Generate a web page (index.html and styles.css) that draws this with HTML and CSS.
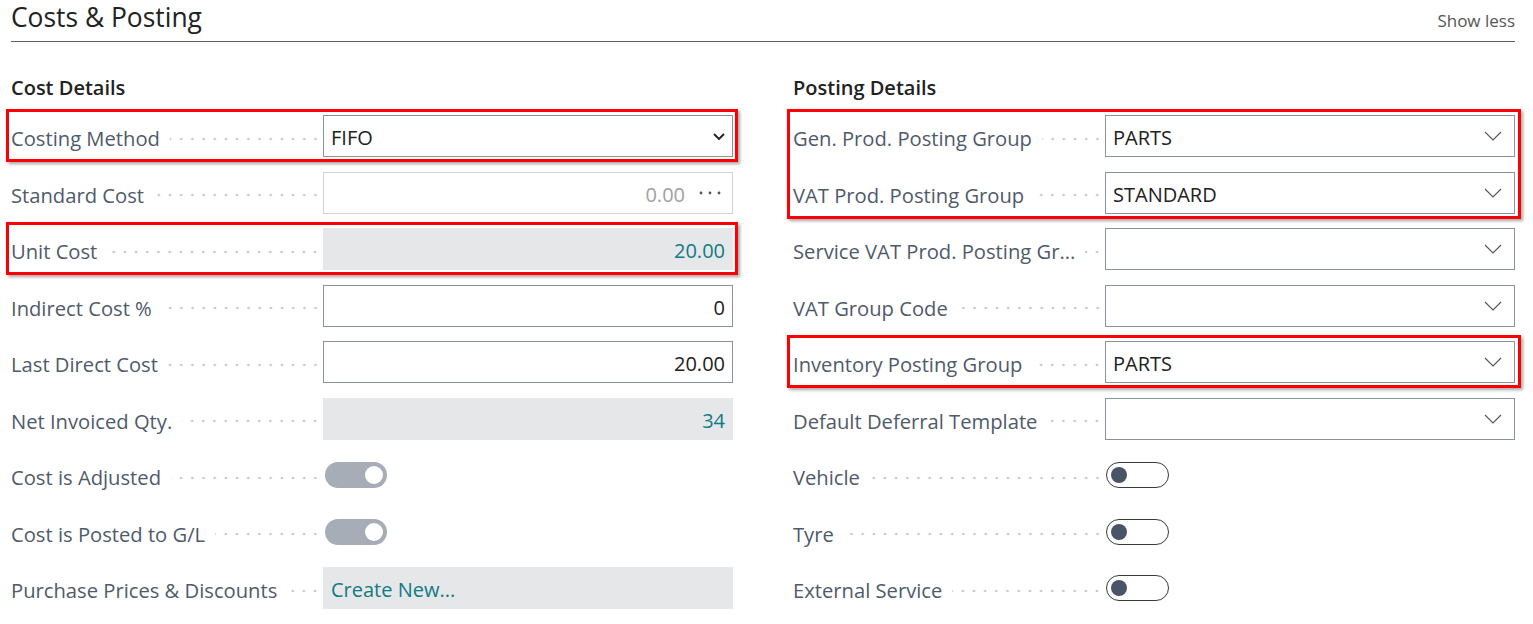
FILE: index.html
```html
<!DOCTYPE html>
<html lang="en">
<head>
<meta charset="utf-8">
<title>Costs &amp; Posting</title>
<link rel="stylesheet" href="styles.css">
</head>
<body>
<div class="page">
  <header class="head">
    <h1 class="title">Costs &amp; Posting</h1>
    <span class="more">Show less</span>
  </header>
  <div class="cols">
    <section class="col">
      <h2 class="sec">Cost Details</h2>
      <div class="row hl">
        <div class="lbl"><span class="txt">Costing Method</span><span class="lead"></span></div>
        <div class="field"><span class="val">FIFO</span><svg class="chev-dark" width="12" height="7" viewBox="0 0 12 7"><path d="M1 1l5 5 5-5" fill="none" stroke="#222" stroke-width="1.9"/></svg></div>
      </div>
      <div class="row">
        <div class="lbl"><span class="txt">Standard Cost</span><span class="lead"></span></div>
        <div class="field soft"><span class="val num muted">0.00</span><svg class="ell" width="22" height="4" viewBox="0 0 22 4"><circle cx="2" cy="2" r="1.4" fill="#555"/><circle cx="11" cy="2" r="1.4" fill="#555"/><circle cx="20" cy="2" r="1.4" fill="#555"/></svg></div>
      </div>
      <div class="row hl">
        <div class="lbl"><span class="txt">Unit Cost</span><span class="lead"></span></div>
        <div class="field ro"><span class="val num teal">20.00</span></div>
      </div>
      <div class="row">
        <div class="lbl"><span class="txt">Indirect Cost %</span><span class="lead"></span></div>
        <div class="field"><span class="val num">0</span></div>
      </div>
      <div class="row">
        <div class="lbl"><span class="txt">Last Direct Cost</span><span class="lead"></span></div>
        <div class="field"><span class="val num">20.00</span></div>
      </div>
      <div class="row">
        <div class="lbl"><span class="txt">Net Invoiced Qty.</span><span class="lead"></span></div>
        <div class="field ro"><span class="val num teal">34</span></div>
      </div>
      <div class="row">
        <div class="lbl"><span class="txt">Cost is Adjusted</span><span class="lead"></span></div>
        <div class="sw"><span class="tgl on"><span class="knob"></span></span></div>
      </div>
      <div class="row">
        <div class="lbl"><span class="txt">Cost is Posted to G/L</span><span class="lead"></span></div>
        <div class="sw"><span class="tgl on"><span class="knob"></span></span></div>
      </div>
      <div class="row">
        <div class="lbl"><span class="txt">Purchase Prices &amp; Discounts</span><span class="lead"></span></div>
        <div class="field ro"><span class="val teal">Create New...</span></div>
      </div>
    </section>

    <section class="col">
      <h2 class="sec">Posting Details</h2>
      <div class="hlgroup">
        <div class="row">
          <div class="lbl"><span class="txt">Gen. Prod. Posting Group</span><span class="lead"></span></div>
          <div class="field"><span class="val">PARTS</span><svg class="chev" width="18" height="10" viewBox="0 0 18 10"><path d="M1 1l8 8 8-8" fill="none" stroke="#555" stroke-width="1.1"/></svg></div>
        </div>
        <div class="row">
          <div class="lbl"><span class="txt">VAT Prod. Posting Group</span><span class="lead"></span></div>
          <div class="field"><span class="val">STANDARD</span><svg class="chev" width="18" height="10" viewBox="0 0 18 10"><path d="M1 1l8 8 8-8" fill="none" stroke="#555" stroke-width="1.1"/></svg></div>
        </div>
      </div>
      <div class="row">
        <div class="lbl"><span class="txt">Service VAT Prod. Posting Gr...</span><span class="lead"></span></div>
        <div class="field"><span class="val"></span><svg class="chev" width="18" height="10" viewBox="0 0 18 10"><path d="M1 1l8 8 8-8" fill="none" stroke="#555" stroke-width="1.1"/></svg></div>
      </div>
      <div class="row">
        <div class="lbl"><span class="txt">VAT Group Code</span><span class="lead"></span></div>
        <div class="field"><span class="val"></span><svg class="chev" width="18" height="10" viewBox="0 0 18 10"><path d="M1 1l8 8 8-8" fill="none" stroke="#555" stroke-width="1.1"/></svg></div>
      </div>
      <div class="row hl">
        <div class="lbl"><span class="txt">Inventory Posting Group</span><span class="lead"></span></div>
        <div class="field"><span class="val">PARTS</span><svg class="chev" width="18" height="10" viewBox="0 0 18 10"><path d="M1 1l8 8 8-8" fill="none" stroke="#555" stroke-width="1.1"/></svg></div>
      </div>
      <div class="row">
        <div class="lbl"><span class="txt">Default Deferral Template</span><span class="lead"></span></div>
        <div class="field"><span class="val"></span><svg class="chev" width="18" height="10" viewBox="0 0 18 10"><path d="M1 1l8 8 8-8" fill="none" stroke="#555" stroke-width="1.1"/></svg></div>
      </div>
      <div class="row">
        <div class="lbl"><span class="txt">Vehicle</span><span class="lead"></span></div>
        <div class="sw"><span class="tgl off"><span class="knob"></span></span></div>
      </div>
      <div class="row">
        <div class="lbl"><span class="txt">Tyre</span><span class="lead"></span></div>
        <div class="sw"><span class="tgl off"><span class="knob"></span></span></div>
      </div>
      <div class="row">
        <div class="lbl"><span class="txt">External Service</span><span class="lead"></span></div>
        <div class="sw"><span class="tgl off"><span class="knob"></span></span></div>
      </div>
    </section>
  </div>
</div>
</body>
</html>
```

FILE: styles.css
```css
* { box-sizing: border-box; }
html, body { margin: 0; padding: 0; background: #fff; }
body {
  font-family: "Open Sans", "Noto Sans", sans-serif;
  color: #212121;
  width: 1533px;
  height: 624px;
  overflow: hidden;
}
.page {
  padding: 0 18px 0 11px;
}
.head {
  display: flex;
  justify-content: space-between;
  align-items: baseline;
  height: 42px;
  border-bottom: 1px solid #5b6068;
}
.title {
  margin: 0;
  font-size: 26.4px;
  font-weight: 400;
  line-height: 34px;
  color: #222;
}
.more {
  font-size: 17px;
  color: #555;
  line-height: 24px;
}
.cols {
  display: flex;
  gap: 60px;
}
.col {
  width: 722px;
  display: flex;
  flex-direction: column;
}
.sec {
  margin: 0;
  padding-top: 32px;
  height: 65.75px;
  font-size: 20px;
  line-height: 28px;
  font-weight: 600;
  color: #222;
}
.row {
  display: flex;
  align-items: center;
  height: 56.5px;
  position: relative;
}
.lbl {
  width: 312px;
  flex: none;
  display: flex;
  align-items: center;
  height: 42px;
}
.txt {
  font-size: 20.2px;
  color: #4f5a6b;
  white-space: nowrap;
  padding-top: 4px;
}
.lead {
  flex: 1;
  height: 4px;
  margin: 5px 0 0 10px;
  background-image: radial-gradient(circle, #c5c9ce 1.2px, transparent 1.6px);
  background-size: 11.2px 4px;
  background-repeat: repeat-x;
  background-position: right 2px center;
}
.field {
  width: 410px;
  height: 42px;
  flex: none;
  border: 1px solid #8c929c;
  display: flex;
  align-items: center;
  padding: 0 7px;
  background: #fff;
}
.field.soft { border-color: #d1d4d8; padding-right: 11px; }
.field.ro { background: #e6e7e9; border-color: #e6e7e9; }
.val {
  flex: 1;
  font-size: 20px;
  padding-top: 3px;
  white-space: nowrap;
  color: #212121;
}
.val.num { text-align: right; }
.val.muted { color: #a1a1a1; }
.val.teal { color: #0f7b84; }
.ell { margin-left: 14px; flex: none; }
.chev-dark { flex: none; margin-right: 0; }
.chev { flex: none; margin-right: 5px; }
.sw {
  width: 410px;
  display: flex;
  align-items: center;
  height: 42px;
}
.tgl {
  position: relative;
  display: block;
  width: 62px;
  height: 26px;
  border-radius: 13px;
}
.tgl.on {
  background: #a6adb6;
  margin-left: 2px;
}
.tgl.on .knob {
  position: absolute;
  right: 4px;
  top: 4px;
  width: 18px;
  height: 18px;
  border-radius: 50%;
  background: #fff;
}
.tgl.off {
  border: 1px solid #3a3a3a;
  margin-left: 1px;
  width: 63px;
}
.tgl.off .knob {
  position: absolute;
  left: 4px;
  top: 4px;
  width: 16px;
  height: 16px;
  border-radius: 50%;
  background: #4a5467;
}
.row.hl::after,
.hlgroup::after {
  content: "";
  position: absolute;
  top: 1.5px;
  bottom: 2px;
  left: -5px;
  right: -5px;
  border: 3px solid #ff0000;
  box-shadow: 2px 2px 3px rgba(0, 0, 0, 0.35);
  pointer-events: none;
}
.hlgroup {
  position: relative;
}
.col:last-child .row.hl::after,
.col:last-child .hlgroup::after {
  left: -6px;
  right: -6px;
}
```
